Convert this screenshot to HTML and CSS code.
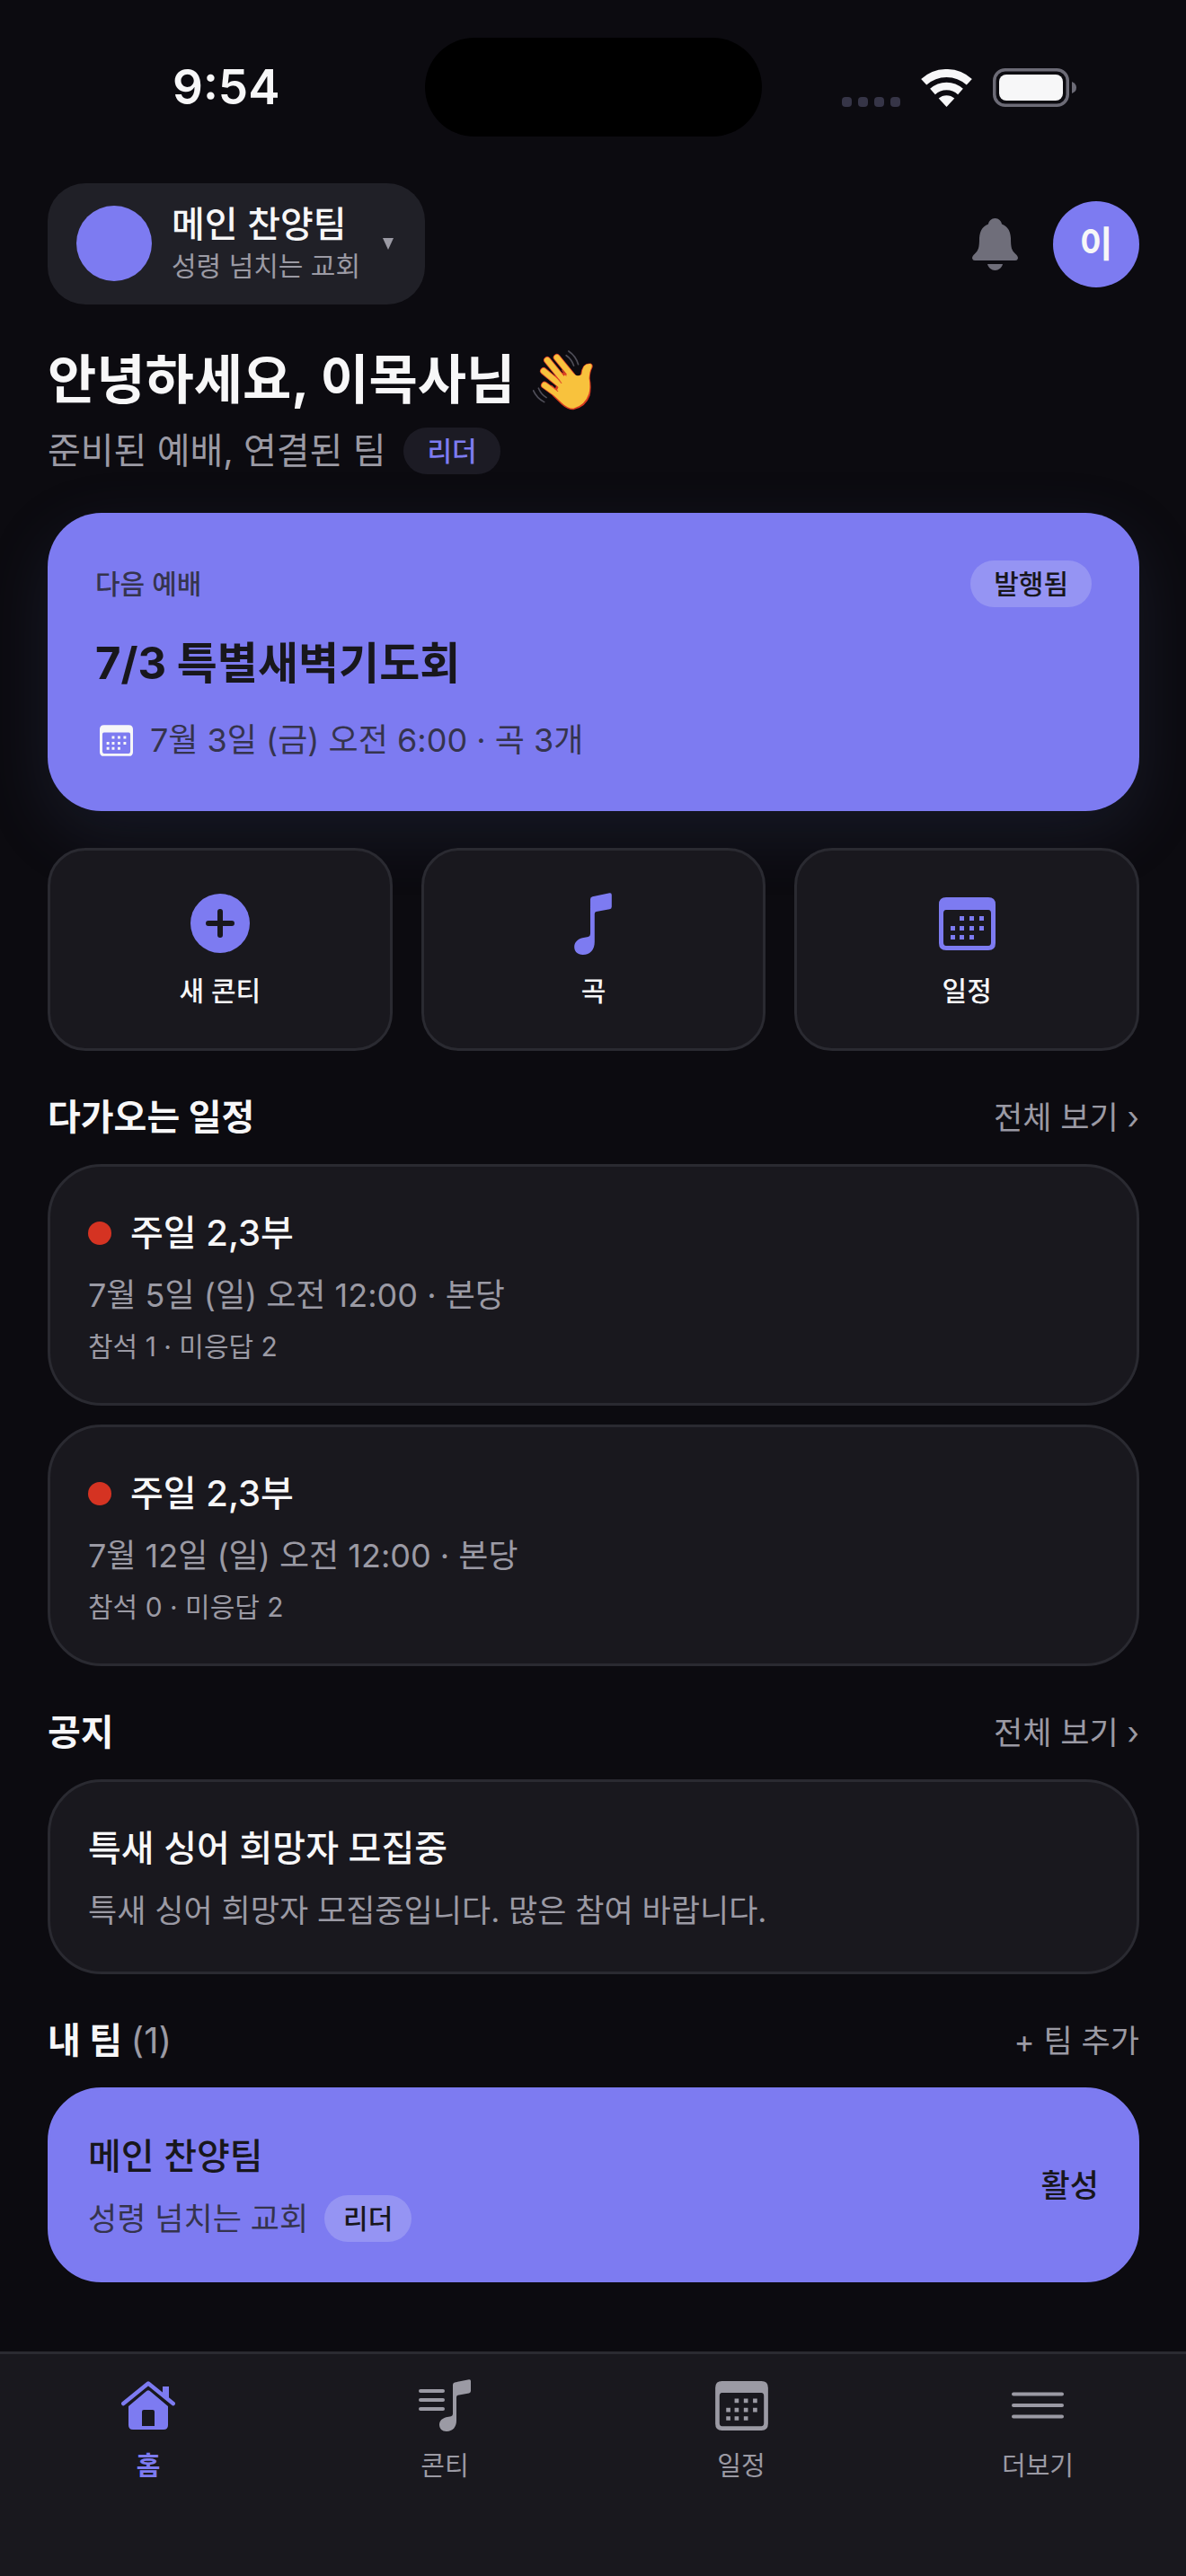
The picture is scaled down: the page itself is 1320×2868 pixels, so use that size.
FILE: index.html
```
<!DOCTYPE html>
<html lang="ko">
<head>
    <meta charset="UTF-8">
    <meta name="viewport" content="width=device-width, initial-scale=1.0">
    <title>메인 찬양팀</title>
    <link rel="stylesheet" href="styles.css">
</head>
<body>
    <!-- shared icons -->
    <svg class="sprite" aria-hidden="true">
        <symbol id="calendar" viewBox="0 0 63 59">
            <path fill-rule="evenodd" d="M8 0H55Q63 0 63 8V51Q63 59 55 59H8Q0 59 0 51V8Q0 0 8 0ZM8 14Q5 14 5 18V50Q5 54 8 54H55Q58 54 58 50V18Q58 14 55 14Z"/>
            <path d="M23 21h5v5h-5zM34 21h5v5h-5zM45 21h5v5h-5zM13 32h5v5h-5zM23 32h5v5h-5zM34 32h5v5h-5zM45 32h5v5h-5zM13 42h5v5h-5zM23 42h5v5h-5zM34 42h5v5h-5z"/>
        </symbol>
        <symbol id="note" viewBox="23 0 35 58">
            <path d="M38 6Q38 4 40 3.500L56 .3Q58 0 58 2V13Q58 15 56 15.400L43.500 17.700Q42 18 42 20V46C42 53 38 58 31 58C26 58 23 55 23 50.500C23 46 26.500 43.300 30.500 42.200L36 41.200Q38 40.800 38 38.500Z"/>
        </symbol>
    </svg>

    <div class="status">
        <div class="time">9:54</div>
        <div class="island"></div>
        <div class="signals">
            <div class="dots"><i></i><i></i><i></i><i></i></div>
            <svg width="57" height="42" viewBox="0 0 57 42" fill="none" stroke="#f7f7f8">
                <path class="line" stroke-width="9" d="M3.200 14.300A37.500 37.500 0 0 1 53.800 14.300"/>
                <path class="line" stroke-width="8.500" d="M13 25A23 23 0 0 1 44 25"/>
                <path stroke="none" d="M28.500 42L19.700 32.600A13 13 0 0 1 37.300 32.600Z"/>
            </svg>
            <svg width="93" height="43" viewBox="0 0 93 43">
                <rect x="1.750" y="1.750" width="81.500" height="39.500" rx="12" fill="none" stroke="#6c6b76" stroke-width="3.500"/>
                <rect x="7" y="7" width="71" height="29" rx="8"/>
                <path d="M88 15Q93 17 93 21.500T88 28Z" fill="#6c6b76"/>
            </svg>
        </div>
    </div>

    <main>
        <header class="topbar">
            <button class="team-switch" type="button">
                <span class="team-color"></span>
                <span class="team-text">
                    <strong>메인 찬양팀</strong>
                    <small>성령 넘치는 교회</small>
                </span>
                <svg width="12" height="13" viewBox="0 0 12 13"><path d="M0 0H12L6 13Z" fill="#9b9aa4"/></svg>
            </button>
            <div class="topbar-right">
                <button class="bell" type="button" aria-label="알림">
                    <svg width="51" height="58" viewBox="0 0 51 58">
                        <path d="M25.500 0C29.500 0 32.500 3 33 6.500C40 9 42.500 15 43 22C43 33 44 35.500 48 39.500C50 41.500 51 42.500 51 44.500Q50.500 47 48 47H3Q.5 47 0 44.500C0 42.500 1 41.500 3 39.500C7 35.500 8 33 8 22C8.500 15 11 9 18 6.500C18.500 3 21.500 0 25.500 0Z"/>
                        <path d="M17 51H34C33 55 29.500 58 25.500 58S18 55 17 51Z"/>
                    </svg>
                </button>
                <button class="avatar" type="button">이</button>
            </div>
        </header>

        <div class="greeting">
            <h1>안녕하세요, 이목사님
                <svg width="67" height="67" viewBox="35 27 200 200" role="img" aria-label="손 흔들기">
                    <g fill="none" stroke-linecap="round" stroke-linejoin="round">
                        <g stroke="#e0452a" stroke-width="24">
                            <path d="M115 51L165 112M83 60L140 130M71 96L130 145M74 143L125 180"/>
                        </g>
                        <path fill="#d63a1f" d="M172 108Q186 116 194 107Q196 90 203 80Q211 69 228 70Q237 75 233 85Q226 98 225 120Q231 150 225 178Q212 216 170 225Q150 225 130 207L100 178L130 100Z"/>
                        <g stroke="#f8c23d" stroke-width="19">
                            <path d="M115 51L165 112M83 60L140 130M71 96L130 145M74 143L125 180"/>
                        </g>
                        <path fill="#f8c23d" d="M165 100Q186 119 197 107Q199 90 205 80Q212 71 226 72Q234 75 230 85Q223 98 222 120Q227 150 221 172Q208 211 170 220Q150 220 132 202L106 178L140 110Z"/>
                        <path stroke="#e0452a" stroke-width="3" d="M132 93L146 111M110 112L130 136M97 144L118 163"/>
                        <g stroke="#4e4d57" stroke-width="5">
                            <path d="M154 30Q178 46 186 74M146 44Q164 56 171 78M54 153Q62 173 80 184M37 161Q48 186 73 199"/>
                        </g>
                    </g>
                </svg>
            </h1>
            <p>준비된 예배, 연결된 팀 <span class="pill pill-dark">리더</span></p>
        </div>

        <a class="hero" href="#">
            <div class="hero-top">
                <span class="hero-label">다음 예배</span>
                <span class="pill pill-bold">발행됨</span>
            </div>
            <h2>7/3 특별새벽기도회</h2>
            <p>
                <svg width="37" height="35"><use href="#calendar"/></svg>
                7월 3일 (금) 오전 6:00 · 곡 3개
            </p>
        </a>

        <div class="quick">
            <a href="#">
                <span class="quick-icon">
                    <svg width="66" height="66" viewBox="0 0 66 66">
                        <circle cx="33" cy="33" r="33"/>
                        <path d="M33 20V46M20 33H46" stroke="#19181e" stroke-width="6" stroke-linecap="round"/>
                    </svg>
                </span>
                새 콘티
            </a>
            <a href="#">
                <span class="quick-icon"><svg width="42" height="69"><use href="#note"/></svg></span>
                곡
            </a>
            <a href="#">
                <span class="quick-icon"><svg width="63" height="59"><use href="#calendar"/></svg></span>
                일정
            </a>
        </div>

        <section>
            <div class="section-head">
                <h2>다가오는 일정</h2>
                <a href="#">전체 보기 ›</a>
            </div>
            <article class="card">
                <h3><span class="dot"></span>주일 2,3부</h3>
                <p class="date">7월 5일 (일) 오전 12:00 · 본당</p>
                <p class="small">참석 1 · 미응답 2</p>
            </article>
            <article class="card">
                <h3><span class="dot"></span>주일 2,3부</h3>
                <p class="date">7월 12일 (일) 오전 12:00 · 본당</p>
                <p class="small">참석 0 · 미응답 2</p>
            </article>
        </section>

        <section>
            <div class="section-head">
                <h2>공지</h2>
                <a href="#">전체 보기 ›</a>
            </div>
            <article class="card">
                <h3>특새 싱어 희망자 모집중</h3>
                <p>특새 싱어 희망자 모집중입니다. 많은 참여 바랍니다.</p>
            </article>
        </section>

        <section>
            <div class="section-head">
                <h2>내 팀 <span class="count">(1)</span></h2>
                <button type="button">+ 팀 추가</button>
            </div>
            <article class="card card-active">
                <div>
                    <h3>메인 찬양팀</h3>
                    <p>성령 넘치는 교회 <span class="pill">리더</span></p>
                </div>
                <span class="state">활성</span>
            </article>
        </section>
    </main>

    <nav class="tabs">
        <a class="on" href="#">
            <span class="tab-icon">
                <svg width="60" height="54" viewBox="0 0 60 54">
                    <path d="M46 6H53V21L46 15Z"/>
                    <path d="M2.300 25L30 2.500L57.700 25" fill="none" stroke="currentColor" stroke-width="4.500" stroke-linecap="round" stroke-linejoin="round"/>
                    <path fill-rule="evenodd" d="M8 28L28.500 10.800Q30 9.500 31.500 10.800L52 28V49Q52 54 47 54H13Q8 54 8 49ZM25 32Q23 32 23 34V50H37V34Q37 32 35 32Z"/>
                </svg>
            </span>
            홈
        </a>
        <a href="#">
            <span class="tab-icon">
                <svg width="58" height="58" viewBox="0 0 58 58">
                    <path d="M2 13H27M2 23H27M2 33H27" stroke="currentColor" stroke-width="4" stroke-linecap="round"/>
                    <use href="#note" x="23" y="0" width="35" height="58"/>
                </svg>
            </span>
            콘티
        </a>
        <a href="#">
            <span class="tab-icon"><svg width="59" height="55"><use href="#calendar"/></svg></span>
            일정
        </a>
        <a href="#">
            <span class="tab-icon">
                <svg width="58" height="30" viewBox="0 0 58 30">
                    <path d="M2 2.500H56M2 15H56M2 27.500H56" stroke="currentColor" stroke-width="4" stroke-linecap="round"/>
                </svg>
            </span>
            더보기
        </a>
    </nav>
</body>
</html>
```
FILE: styles.css
```
* {
    box-sizing: border-box;
}

body {
    margin: 0;
    min-height: 100vh;
    display: flex;
    flex-direction: column;
    background-color: #0c0b10;
    color: #f7f7f8;
    font-family: Inter, "Noto Sans CJK KR", sans-serif;
    font-size: 35px;
    line-height: 52px;
}

h1, h2, h3, p {
    margin: 0;
}

a {
    color: inherit;
    text-decoration: none;
}

button {
    margin: 0;
    padding: 0;
    border: none;
    background: none;
    color: inherit;
    font: inherit;
    cursor: pointer;
}

svg {
    display: block;
    flex: none;
    fill: currentColor;
}

.line {
    fill: none;
}

.sprite {
    position: absolute;
    width: 0;
    height: 0;
}

/* status bar */
.status {
    display: grid;
    grid-template-columns: 1fr auto 1fr;
    align-items: center;
    padding: 42px 122px 52px;
}

.time {
    padding-left: 70px;
    font-size: 53px;
    font-weight: 600;
}

.island {
    width: 375px;
    height: 110px;
    border-radius: 55px;
    background-color: #000;
}

.signals {
    display: flex;
    justify-content: flex-end;
    align-items: flex-end;
    gap: 23px;
}

.dots {
    display: flex;
    gap: 7px;
}

.dots i {
    width: 11px;
    height: 11px;
    border-radius: 4px;
    background-color: #363547;
}

main {
    flex: 1;
    padding: 0 52px 42px 53px;
}

/* team switcher, bell, avatar */
.topbar, .topbar-right, .team-switch {
    display: flex;
    align-items: center;
}

.topbar {
    justify-content: space-between;
}

.topbar-right {
    gap: 39px;
}

.team-switch {
    gap: 22px;
    padding: 21px 35px 22px 32px;
    border-radius: 42px;
    background-color: #202027;
    text-align: left;
}

.team-switch > svg {
    margin-left: 3px;
}

.team-color {
    width: 84px;
    height: 84px;
    border-radius: 50%;
    background-color: #7d7bf1;
}

.team-text strong, .team-text small {
    display: block;
}

.team-text strong {
    font-size: 40px;
    font-weight: 500;
    line-height: 50px;
}

.team-text small {
    color: #9b9aa4;
    font-size: 30px;
    line-height: 42px;
}

.bell {
    color: #6f6e7a;
}

.avatar {
    width: 96px;
    height: 96px;
    border-radius: 50%;
    background-color: #7d7bf1;
    font-size: 40px;
    font-weight: 600;
}

.greeting {
    margin-top: 40px;
}

.greeting h1 {
    display: flex;
    align-items: center;
    gap: 20px;
    font-size: 59px;
    font-weight: 700;
    line-height: 88px;
}

.greeting p {
    display: flex;
    align-items: center;
    gap: 20px;
    margin-top: 9px;
    color: #9b9aa4;
    font-size: 40px;
}

.pill {
    padding: 0 21px;
    border-radius: 26px;
    background-color: #9594f3;
    color: #18171c;
    font-size: 30px;
    font-weight: 500;
    line-height: 52px;
}

.pill-dark {
    padding: 0 26px;
    background-color: #1c1b24;
    color: #7d7bf1;
}

.pill-bold {
    padding: 0 26px;
}

/* next service */
.hero {
    display: block;
    margin-top: 43px;
    padding: 53px;
    border-radius: 60px;
    background-color: #7d7bf1;
    box-shadow: 0 24px 72px rgba(80, 95, 150, 0.17);
    color: #35344d;
}

.hero-top {
    display: flex;
    justify-content: space-between;
}

.hero-label {
    font-size: 30px;
    font-weight: 500;
}

.hero h2 {
    margin: 26px 0 22px;
    color: #18171c;
    font-size: 49px;
    font-weight: 700;
    line-height: 74px;
}

.hero p {
    display: flex;
    align-items: center;
    gap: 19px;
    padding-left: 5px;
    font-size: 36px;
}

.hero svg {
    color: #f7f7f8;
}

.quick {
    display: grid;
    grid-template-columns: repeat(3, 1fr);
    gap: 32px;
    margin-top: 41px;
}

.quick a {
    padding: 42px 0;
    border: 3px solid #2a2a31;
    border-radius: 42px;
    background-color: #19181e;
    font-size: 30px;
    font-weight: 500;
    line-height: 44px;
    text-align: center;
}

.quick-icon {
    display: flex;
    align-items: center;
    justify-content: center;
    height: 78px;
    margin-bottom: 14px;
    color: #7d7bf1;
}

/* sections */
.section-head {
    display: flex;
    justify-content: space-between;
    align-items: center;
    padding: 42px 0 20px;
    line-height: 64px;
}

.section-head h2 {
    font-size: 40px;
    font-weight: 700;
}

.section-head a, .section-head button, .count {
    color: #9b9aa4;
    font-weight: 400;
}

.card {
    padding: 42px;
    border: 3px solid #2a2a31;
    border-radius: 60px;
    background-color: #19181e;
}

.card + .card {
    margin-top: 21px;
}

.card h3 {
    display: flex;
    align-items: center;
    gap: 21px;
    font-size: 40px;
    font-weight: 500;
    line-height: 64px;
}

.card p {
    margin-top: 11px;
    color: #9b9aa4;
}

.card .date {
    font-size: 36px;
}

.card .small {
    font-size: 30px;
    line-height: 41px;
}

.dot {
    width: 26px;
    height: 26px;
    border-radius: 50%;
    background-color: #d53322;
}

.card-active {
    display: flex;
    justify-content: space-between;
    align-items: center;
    border-color: #7d7bf1;
    background-color: #7d7bf1;
    color: #18171c;
}

.card-active p {
    display: flex;
    align-items: center;
    gap: 18px;
    color: #35344d;
}

.state {
    font-weight: 500;
}

/* bottom tabs */
.tabs {
    display: grid;
    grid-template-columns: repeat(4, 1fr);
    padding: 21px 0 102px;
    border-top: 3px solid #2a2a31;
    background-color: #19181e;
}

.tabs a {
    color: #9b9aa4;
    font-size: 29px;
    line-height: 40px;
    text-align: center;
}

.tabs .on {
    color: #7d7bf1;
    font-weight: 600;
}

.tab-icon {
    display: flex;
    align-items: center;
    justify-content: center;
    height: 72px;
    margin-bottom: 12px;
}
```
